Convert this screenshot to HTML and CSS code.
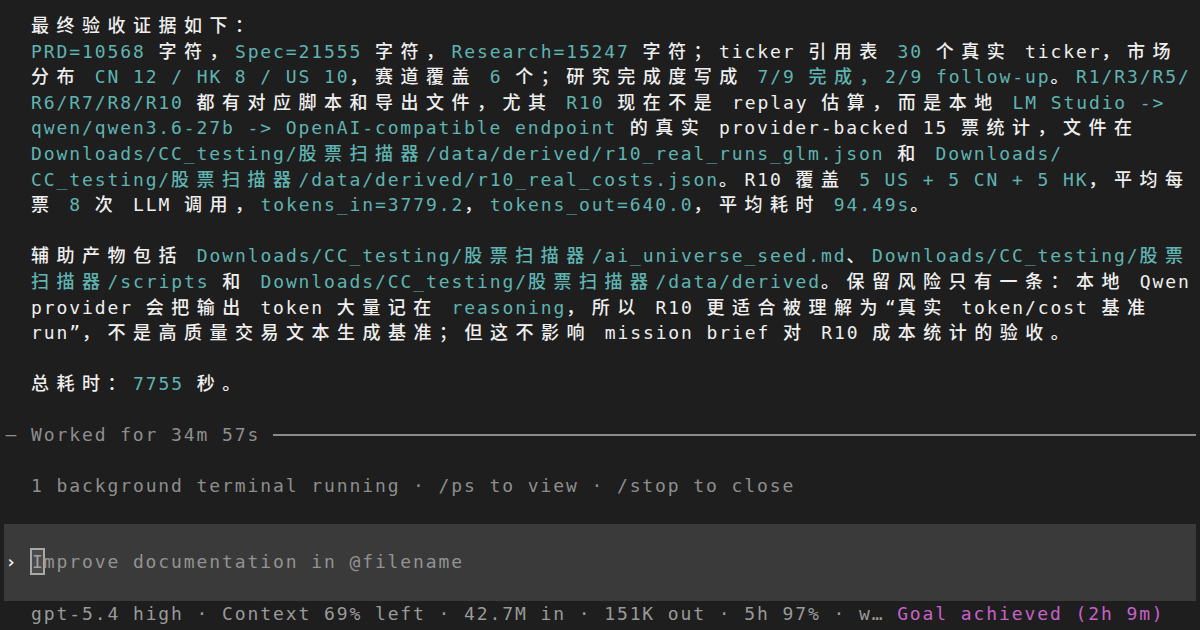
FILE: index.html
```html
<!DOCTYPE html>
<html lang="zh-CN">
<head>
<meta charset="utf-8">
<title>Terminal</title>
<link rel="stylesheet" href="styles.css">
</head>
<body>
<div class="screen">
  <div class="msg">
    <div class="ln"><span class="k">最终验收证据如下：</span></div>
    <div class="ln"><span class="t">PRD=10568</span> <span class="k">字符，</span><span class="t">Spec=21555</span> <span class="k">字符，</span><span class="t">Research=15247</span> <span class="k">字符；</span>ticker <span class="k">引用表</span> <span class="t">30</span> <span class="k">个真实</span> ticker<span class="k">，市场</span></div>
    <div class="ln"><span class="k">分布</span> <span class="t">CN 12 / HK 8 / US 10</span><span class="k">，赛道覆盖</span> <span class="t">6</span> <span class="k">个；研究完成度写成</span> <span class="t">7/9 </span><span class="t k">完成，</span><span class="t">2/9 follow-up</span><span class="k">。</span><span class="t">R1/R3/R5/</span></div>
    <div class="ln"><span class="t">R6/R7/R8/R10</span> <span class="k">都有对应脚本和导出文件，尤其</span> <span class="t">R10</span> <span class="k">现在不是</span> replay <span class="k">估算，而是本地</span> <span class="t">LM Studio -&gt;</span></div>
    <div class="ln"><span class="t">qwen/qwen3.6-27b -&gt; OpenAI-compatible endpoint</span> <span class="k">的真实</span> provider-backed 15 <span class="k">票统计，文件在</span></div>
    <div class="ln"><span class="t">Downloads/CC_testing/</span><span class="t k">股票扫描器</span><span class="t">/data/derived/r10_real_runs_glm.json</span> <span class="k">和</span> <span class="t">Downloads/</span></div>
    <div class="ln"><span class="t">CC_testing/</span><span class="t k">股票扫描器</span><span class="t">/data/derived/r10_real_costs.json</span><span class="k">。</span>R10 <span class="k">覆盖</span> <span class="t">5 US + 5 CN + 5 HK</span><span class="k">，平均每</span></div>
    <div class="ln"><span class="k">票</span> <span class="t">8</span> <span class="k">次</span> LLM <span class="k">调用，</span><span class="t">tokens_in=3779.2</span><span class="k">，</span><span class="t">tokens_out=640.0</span><span class="k">，平均耗时</span> <span class="t">94.49s</span><span class="k">。</span></div>
    <div class="ln"></div>
    <div class="ln"><span class="k">辅助产物包括</span> <span class="t">Downloads/CC_testing/</span><span class="t k">股票扫描器</span><span class="t">/ai_universe_seed.md</span><span class="k">、</span><span class="t">Downloads/CC_testing/</span><span class="t k">股票</span></div>
    <div class="ln"><span class="t k">扫描器</span><span class="t">/scripts</span> <span class="k">和</span> <span class="t">Downloads/CC_testing/</span><span class="t k">股票扫描器</span><span class="t">/data/derived</span><span class="k">。保留风险只有一条：本地</span> Qwen</div>
    <div class="ln">provider <span class="k">会把输出</span> token <span class="k">大量记在</span> <span class="t">reasoning</span><span class="k">，所以</span> R10 <span class="k">更适合被理解为</span>“<span class="k">真实</span> token/cost <span class="k">基准</span></div>
    <div class="ln">run”<span class="k">，不是高质量交易文本生成基准；但这不影响</span> mission brief <span class="k">对</span> R10 <span class="k">成本统计的验收。</span></div>
    <div class="ln"></div>
    <div class="ln"><span class="k">总耗时：</span><span class="t">7755</span> <span class="k">秒。</span></div>
    <div class="ln"></div>
  </div>
  <div class="ln worked"><span class="dim">— Worked for 34m 57s </span><span class="rule"></span></div>
  <div class="ln"></div>
  <div class="ln msg dim">1 background terminal running · /ps to view · /stop to close</div>
  <div class="ln"></div>
  <div class="composer">
    <div class="ln"></div>
    <div class="ln"><span class="prompt">›</span> <span class="cursor">I</span><span class="ph">mprove documentation in @filename</span></div>
    <div class="ln"></div>
  </div>
  <div class="ln msg status">gpt-5.4 high · Context 69% left · 42.7M in · 151K out · 5h 97% · w… <span class="goal">Goal achieved (2h 9m)</span></div>
</div>
</body>
</html>
```

FILE: styles.css
```css
html, body {
  margin: 0;
  padding: 0;
  background: #1e1e1e;
}

body {
  width: 1200px;
  height: 630px;
  overflow: hidden;
  color: #efefef;
  font-family: "DejaVu Sans Mono", "Liberation Mono", monospace;
  font-size: 18px;
  letter-spacing: 1.9px;
}

.screen {
  padding: 12px 4px 0;
}

.ln {
  height: 25.6px;
  line-height: 25.6px;
  white-space: pre;
  padding-left: 1.5px;
}

.msg .ln,
.ln.msg {
  padding-left: 27px;
}

.t {
  color: #5fb4b2;
}

.k {
  font-family: "Noto Sans CJK SC", "Noto Sans CJK JP", sans-serif;
  font-size: 18px;
  font-weight: 500;
  letter-spacing: 7.5px;
}

.dim {
  color: #8e8e8e;
}

.worked {
  display: flex;
  align-items: center;
}

.worked .rule {
  flex: 1;
  height: 0;
  border-top: 2px solid #8a8a8a;
  margin-top: 1px;
}

.composer {
  background: #3a3a3a;
}

.prompt {
  color: #f2f2f2;
  font-weight: bold;
}

.cursor {
  color: #a0a0a0;
  outline: 2px solid #a9a9a9;
  outline-offset: -1px;
  background: #4a4a4a;
  height: 25px;
  line-height: 25px;
  display: inline-block;
  vertical-align: top;
  width: 12.72px;
  letter-spacing: 0;
  text-align: center;
}

.ph {
  color: #939393;
}

.status {
  color: #9a9a9a;
}

.goal {
  color: #c862c8;
}
```
